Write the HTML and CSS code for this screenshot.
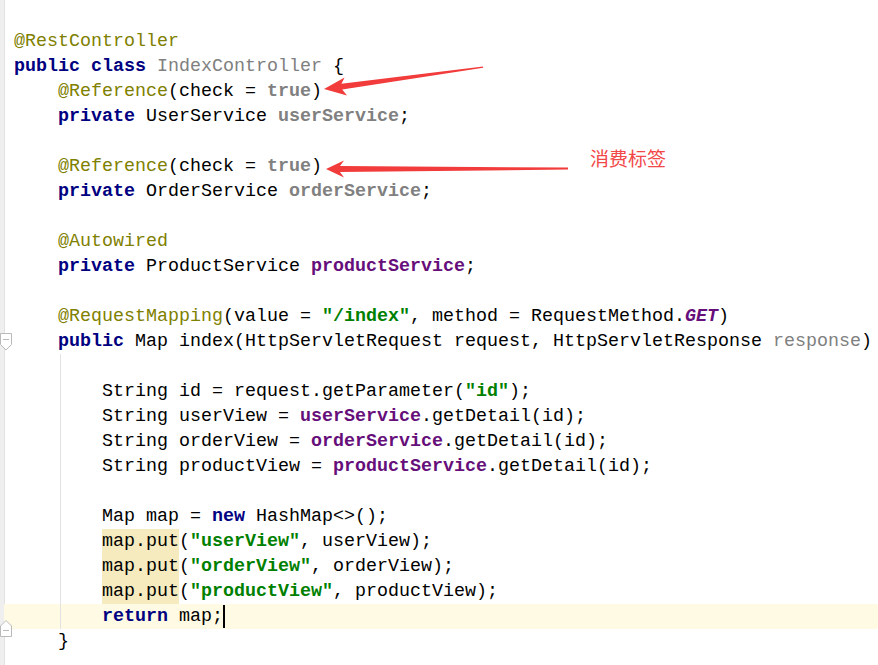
FILE: index.html
```html
<!DOCTYPE html>
<html lang="zh-CN">
<head>
    <meta charset="UTF-8">
    <title>IndexController.java</title>
    <link rel="stylesheet" href="styles.css">
</head>
<body>

<div class="editor">
    <div class="line"><span class="ann">@RestController</span></div>
    <div class="line"><span class="kw">public class</span> <span class="unused">IndexController</span> {</div>
    <div class="line">    <span class="ann">@Reference</span>(check = <span class="dim-bold">true</span>)</div>
    <div class="line">    <span class="kw">private</span> UserService <span class="dim-bold">userService</span>;</div>
    <div class="line"></div>
    <div class="line">    <span class="ann">@Reference</span>(check = <span class="dim-bold">true</span>)</div>
    <div class="line">    <span class="kw">private</span> OrderService <span class="dim-bold">orderService</span>;</div>
    <div class="line"></div>
    <div class="line">    <span class="ann">@Autowired</span></div>
    <div class="line">    <span class="kw">private</span> ProductService <span class="field">productService</span>;</div>
    <div class="line"></div>
    <div class="line">    <span class="ann">@RequestMapping</span>(value = <span class="str">"/index"</span>, method = RequestMethod.<span class="const">GET</span>)</div>
    <div class="line"><span class="fold fold-open"><svg width="13" height="18" viewBox="0 0 13 18"><path d="M0.5 0.5 H11.5 V11.5 L6 17 L0.5 11.5 Z" fill="#fff" stroke="#b9b9b9"/><path d="M3 6.5 H9" stroke="#b9b9b9"/></svg></span>    <span class="kw">public</span> Map index(HttpServletRequest request, HttpServletResponse <span class="unused">response</span>)</div>

    <div class="body">
        <div class="line"></div>
        <div class="line">        String id = request.getParameter(<span class="str">"id"</span>);</div>
        <div class="line">        String userView = <span class="field">userService</span>.getDetail(id);</div>
        <div class="line">        String orderView = <span class="field">orderService</span>.getDetail(id);</div>
        <div class="line">        String productView = <span class="field">productService</span>.getDetail(id);</div>
        <div class="line"></div>
        <div class="line">        Map map = <span class="kw">new</span> HashMap&lt;&gt;();</div>
        <div class="line">        <span class="hl">map.put</span>(<span class="str">"userView"</span>, userView);</div>
        <div class="line">        <span class="hl">map.put</span>(<span class="str">"orderView"</span>, orderView);</div>
        <div class="line">        <span class="hl">map.put</span>(<span class="str">"productView"</span>, productView);</div>
        <div class="line current">        <span class="kw">return</span> map;<span class="caret"></span></div>
    </div>

    <div class="line"><span class="fold fold-close"><svg width="13" height="17" viewBox="0 0 13 17"><path d="M6 0.5 L11.5 6 V16.5 H0.5 V6 Z" fill="#fff" stroke="#b9b9b9"/><path d="M3 10.5 H9" stroke="#b9b9b9"/></svg></span>    }</div>
</div>

<!-- annotations drawn on top of the screenshot -->
<svg class="marks" width="878" height="665" viewBox="0 0 878 665">
    <polygon points="324,89 344.6,77.5 341.4,83.8 483,66.6 483.2,67.8 342.2,89.6 347,95.5" fill="#f23b3b"/>
    <polygon points="326,169 344,160.5 340,166 568,167.6 568,169.6 340,172 344,177.5" fill="#f23b3b"/>
</svg>
<div class="note">消费标签</div>

</body>
</html>
```

FILE: styles.css
```css
body {
    margin: 0;
    background: #fff;
    font-family: "Liberation Mono", "DejaVu Sans Mono", monospace;
    font-size: 18.33px;
    color: #000;
    overflow: hidden;
}

.editor {
    min-height: 665px;
    box-sizing: border-box;
    padding-top: 29px;
    border-left: 4px solid #efefef;
    box-shadow: inset 1px 0 0 #e2e2e2;
}

.line {
    position: relative;
    height: 25px;
    line-height: 25px;
    padding-left: 10px;
    white-space: pre;
}

.line.current {
    background: #fffae3;
}

.body {
    position: relative;
}

/* indent guide of the method body */
.body::before {
    content: "";
    position: absolute;
    left: 56px;
    top: 0;
    bottom: 0;
    width: 1px;
    background: #e2e2e2;
    z-index: 1;
}

.ann { color: #808000; }
.kw { color: #000080; font-weight: bold; }
.unused { color: #808080; }
.dim-bold { color: #808080; font-weight: bold; }
.field { color: #660e7a; font-weight: bold; }
.str { color: #008000; font-weight: bold; }
.const { color: #660e7a; font-weight: bold; font-style: italic; }

.hl {
    display: inline-block;
    background: #f5ebbf;
    height: 25px;
}

.caret {
    display: inline-block;
    width: 2px;
    height: 23px;
    background: #000;
    vertical-align: top;
    margin-top: 1px;
}

.fold {
    position: absolute;
    left: -4px;
    line-height: 0;
}

.fold-open { top: 4px; }
.fold-close { top: -9px; }

.marks {
    position: absolute;
    left: 0;
    top: 0;
    pointer-events: none;
}

.note {
    position: absolute;
    left: 590px;
    top: 146px;
    font-family: "Noto Sans CJK SC", sans-serif;
    font-size: 19px;
    line-height: 24px;
    color: #f24848;
}
```
